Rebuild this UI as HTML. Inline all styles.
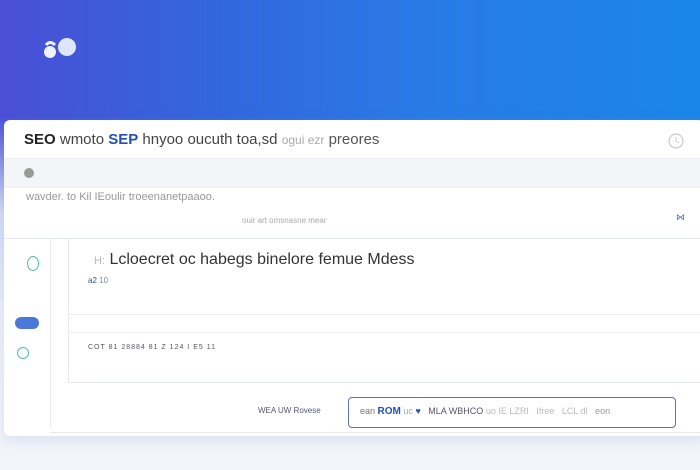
<!DOCTYPE html>
<html><head><meta charset="utf-8"><style>
*{margin:0;padding:0;box-sizing:border-box}
body{width:700px;height:470px;overflow:hidden;font-family:"Liberation Sans",sans-serif;position:relative;
background:linear-gradient(180deg,#2f6fe0 0px,#2a78e6 110px,#c9d8f4 170px,#eef2fa 330px,#f3f5fb 470px);}
.bg{position:absolute;left:0;top:0;width:700px;height:300px;
background:linear-gradient(90deg,#4a4fd6 0%,#3366dc 30%,#2a7ae6 60%,#1a86ea 100%);}
.fade{position:absolute;left:0;top:80px;width:700px;height:240px;background:linear-gradient(180deg,rgba(238,242,250,0) 0%,rgba(238,242,250,0) 15%,rgba(226,234,250,.9) 55%,#eef2fa 100%)}
.card{position:absolute;left:4px;top:120px;width:700px;height:316px;background:#fff;border-radius:6px;box-shadow:0 4px 14px rgba(80,100,160,.15);overflow:hidden}
.t{position:absolute;white-space:nowrap}
.line{position:absolute;background:#e6e9ef}
</style></head><body>
<div class="bg"></div><div class="fade"></div>
<svg style="position:absolute;left:40px;top:36px" width="40" height="24"><circle cx="27" cy="11" r="9" fill="#dde6fb"/><circle cx="10" cy="16" r="6" fill="#eef2fd"/><path d="M6 9 q4 -5 9 0" stroke="#eef2fd" stroke-width="3" fill="none"/></svg>
<div class="card">
<div class="t" style="left:20px;top:11px;font-size:15px;color:#222"><b style="font-weight:600">SEO</b> <span style="color:#444">wmoto</span> <span style="color:#2350b8;font-weight:600">SEP</span> <span style="color:#444">hnyoo oucuth toa,sd</span> <span style="color:#aaa;font-size:12px">ogui ezr</span> <span style="color:#555">preores</span></div>
<svg style="position:absolute;left:664px;top:13px" width="16" height="16"><circle cx="8" cy="8" r="7" fill="none" stroke="#ccc" stroke-width="1.3"/><path d="M8 4v4l3 2" stroke="#ccc" fill="none"/></svg>
<div style="position:absolute;left:0;top:38px;width:700px;height:30px;background:#f4f5f8;border-top:1px solid #eceef2;border-bottom:1px solid #eceef2"></div>
<div style="position:absolute;left:20px;top:48px;width:10px;height:10px;border-radius:50%;background:#999"></div>
<div class="t" style="left:22px;top:71px;font-size:11px;color:#999">wavder. to Kil IEoulir troeenanetpaaoo.</div>
<div class="t" style="left:238px;top:96px;font-size:8px;color:#aaa">ouir art omsnasne  mear</div>
<div class="t" style="left:672px;top:92px;font-size:9px;color:#4a6ac8">⋈</div>
<div class="line" style="left:0;top:118px;width:700px;height:1px"></div>
<div class="line" style="left:46px;top:118px;width:1px;height:190px"></div>
<div class="line" style="left:64px;top:118px;width:1px;height:145px"></div>
<div style="position:absolute;left:23px;top:136px;width:12px;height:15px;border:1.5px solid #4cc0a0;border-radius:50%"></div>
<div class="t" style="left:90px;top:131px;font-size:16px;color:#333"><span style="color:#bbb;font-size:11px">H:</span> Lcloecret oc habegs binelore femue Mdess</div>
<div class="t" style="left:84px;top:156px;font-size:8px;color:#889"><span style="color:#2350b8">a2</span> 10</div>
<div class="line" style="left:64px;top:194px;width:640px;height:1px;background:#eceef2"></div>
<div style="position:absolute;left:11px;top:197px;width:24px;height:12px;border-radius:6px;background:#4a78d8"></div>
<div class="line" style="left:64px;top:212px;width:640px;height:1px;background:#eceef2"></div>
<div style="position:absolute;left:13px;top:227px;width:12px;height:12px;border:1.5px solid #4cc0a0;border-radius:50%"></div>
<div class="t" style="left:84px;top:224px;font-size:7px;color:#556;letter-spacing:1px">COT 81 28884 81 Z 124  I E5 11</div>
<div class="line" style="left:64px;top:262px;width:640px;height:1px"></div>
<div class="t" style="left:254px;top:286px;font-size:8px;color:#557">WEA UW Rovese</div>
<div style="position:absolute;left:344px;top:277px;width:328px;height:31px;border:1.5px solid #5a74b0;border-radius:4px"></div>
<div class="t" style="left:356px;top:286px;font-size:9px;color:#777"><span>ean</span> <b style="color:#2350b8;font-weight:600;font-size:10px">ROM</b> <span style="color:#aaa">uc</span> <span style="color:#2350b8">♥</span> &nbsp; <span style="color:#556">MLA WBHCO</span> <span style="color:#bbb">uo IE LZRI &nbsp; Ifree &nbsp; LCL dl &nbsp;</span> <span style="color:#999">eon</span></div>
<div class="line" style="left:46px;top:312px;width:660px;height:1px"></div>
</div>
</body></html>
